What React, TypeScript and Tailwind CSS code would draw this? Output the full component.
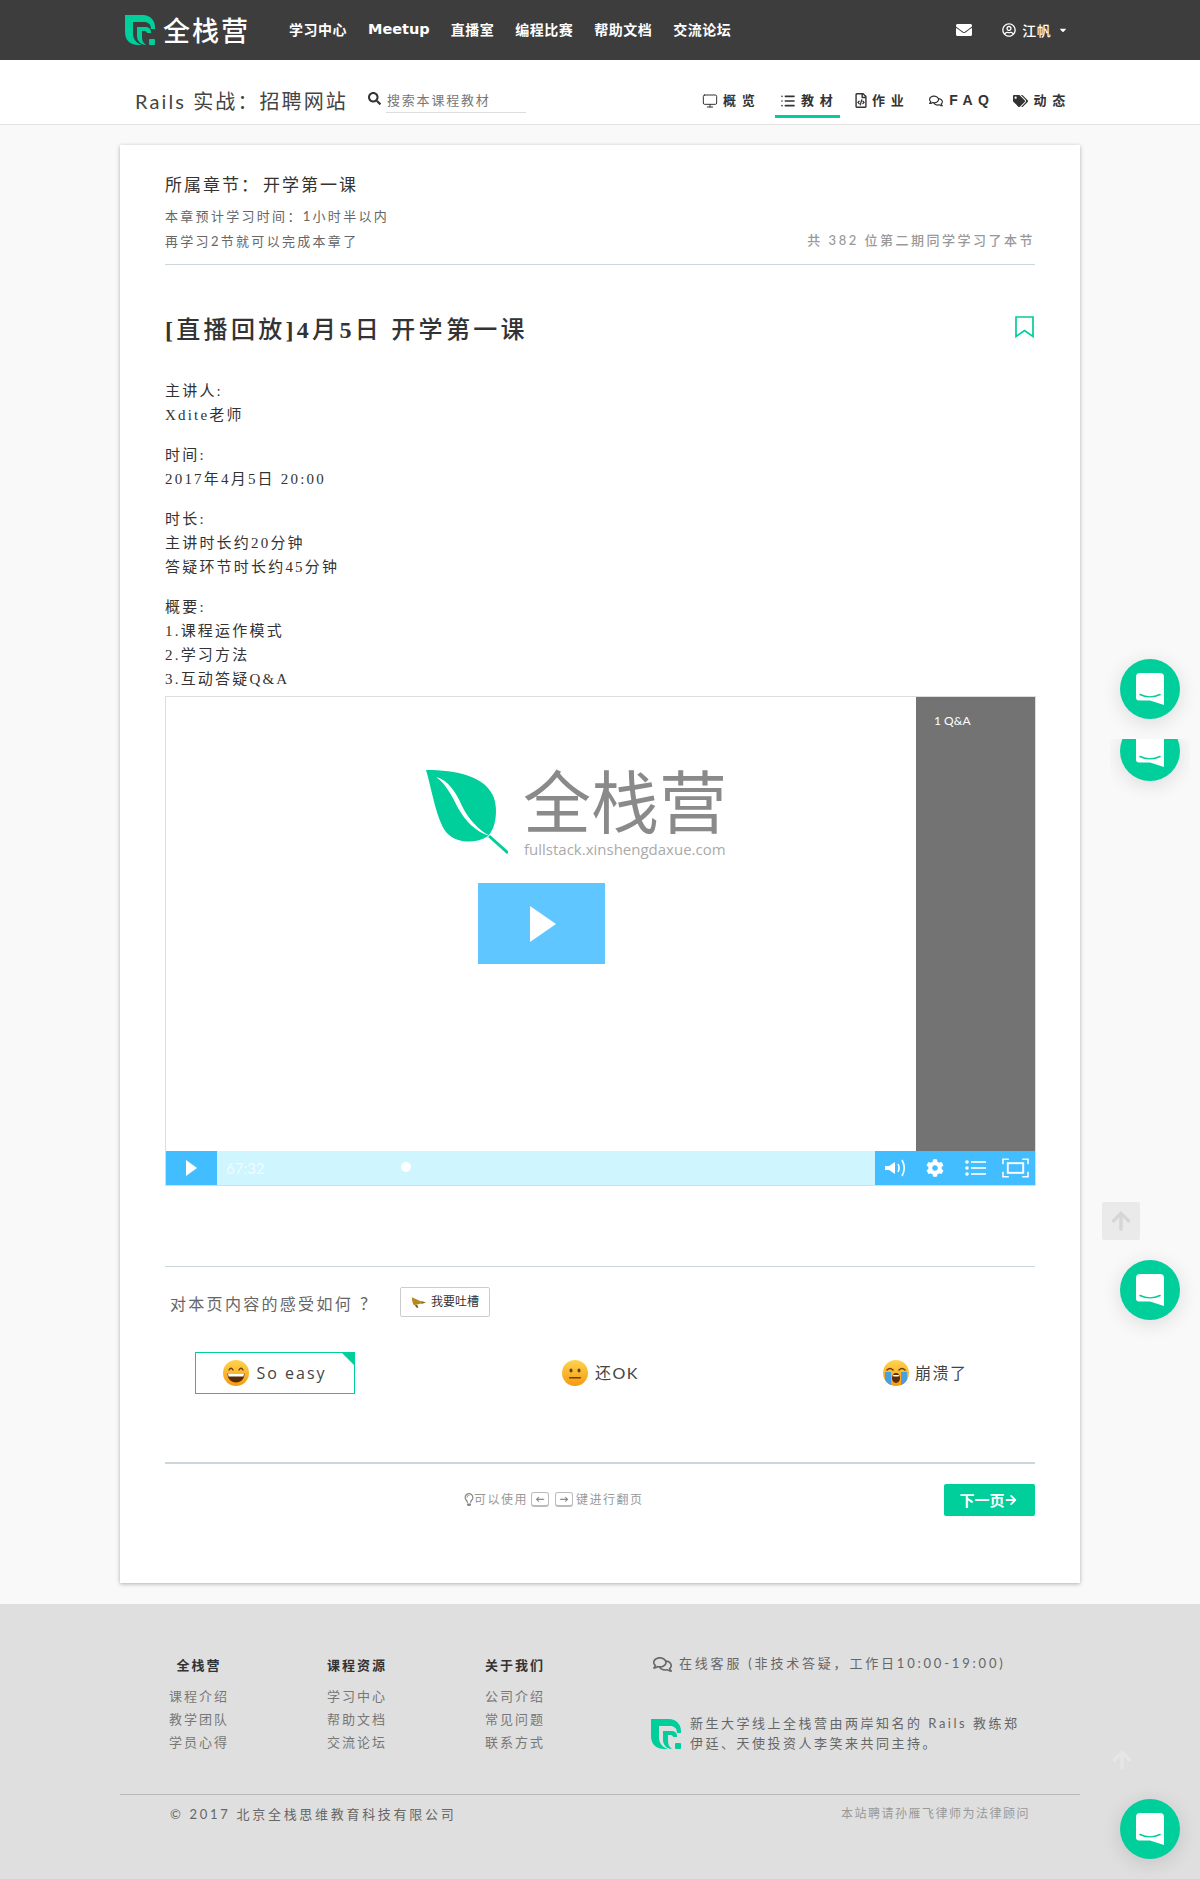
import { List, Monitor } from 'lucide-react';
import {
  FaArrowRight,
  FaArrowUp,
  FaCaretDown,
  FaCog,
  FaEnvelope,
  FaRegComments,
  FaRegFileCode,
  FaRegLightbulb,
  FaRegUserCircle,
  FaSearch,
  FaTags,
} from 'react-icons/fa';

const SANS = 'font-["Lato","Noto_Sans_CJK_SC",sans-serif]';
const SERIF = 'font-["Liberation_Serif","Noto_Sans_CJK_SC",serif]';

function Logo({ className }: { className: string }) {
  return (
    <svg viewBox="0 0 30 30" className={className} fill="#00ce9b">
      <path d="M0 0H18C25 0 30 5 30 12V14H26C26 9 23 7 19 7H8V18C8 24 11 28 17 30H13C5 30 0 25 0 17Z" />
      <path d="M12 12H20C24 12 26 14 26 17V18H22C22 17 21 16 20 16H17V22C17 25 18 28 21 30C16 30 12 26 12 21Z" />
      <rect x="24" y="24" width="6" height="6" rx="1" />
    </svg>
  );
}

function ChatBubble() {
  return (
    <svg viewBox="0 0 28 32" className="w-[28px] h-[32px]">
      <path d="M4 0H24a4 4 0 0 1 4 4V32L14 27.5H3a3 3 0 0 1-3-3V4a4 4 0 0 1 4-4Z" fill="#fff" />
      <path d="M4 21.5C10 24.5 18 24.5 24 21.5" fill="none" stroke="#00ce9b" strokeWidth="1.6" strokeLinecap="round" />
    </svg>
  );
}

function ChatFab() {
  return (
    <div className="w-[60px] h-[60px] rounded-full bg-[#00ce9b] flex items-center justify-center shadow-[0_4px_20px_rgba(0,0,0,0.12)]">
      <ChatBubble />
    </div>
  );
}

function Leaf() {
  return (
    <svg viewBox="0 0 82 86" className="w-[82px] h-[86px]">
      <path d="M0 0C30 0 60 6 68 28C72 40 70 58 62 66C50 74 30 74 20 62C10 48 6 20 0 0Z" fill="#00ce9b" />
      <path d="M10 7C22 10 30 22 36 36C42 48 52 60 64 66C50 62 40 52 32 38C26 26 20 14 10 7Z" fill="#fff" />
      <path d="M63 66L82 83" stroke="#00ce9b" strokeWidth="3" />
    </svg>
  );
}

function SmileEmoji() {
  return (
    <svg viewBox="0 0 26 26" className="w-[26px] h-[26px]">
      <defs>
        <linearGradient id="em1" x1="0" y1="0" x2="0" y2="1">
          <stop offset="0" stopColor="#ffd34d" />
          <stop offset="1" stopColor="#f59a12" />
        </linearGradient>
      </defs>
      <circle cx="13" cy="13" r="13" fill="url(#em1)" />
      <path d="M6 10Q8 6.5 10 10M16 10Q18 6.5 20 10" fill="none" stroke="#6b3d0a" strokeWidth="1.4" strokeLinecap="round" />
      <path d="M4.5 13.5H21.5C21.5 19 18 22.5 13 22.5S4.5 19 4.5 13.5Z" fill="#5a2c08" />
      <path d="M5 13.5H21L20.5 16.5H5.5Z" fill="#fff" />
    </svg>
  );
}

function NeutralEmoji() {
  return (
    <svg viewBox="0 0 26 26" className="w-[26px] h-[26px]">
      <defs>
        <linearGradient id="em2" x1="0" y1="0" x2="0" y2="1">
          <stop offset="0" stopColor="#ffd34d" />
          <stop offset="1" stopColor="#f59a12" />
        </linearGradient>
      </defs>
      <circle cx="13" cy="13" r="13" fill="url(#em2)" />
      <ellipse cx="9" cy="10.5" rx="1.5" ry="2" fill="#6b3d0a" />
      <ellipse cx="17" cy="10.5" rx="1.5" ry="2" fill="#6b3d0a" />
      <rect x="7" y="17" width="12" height="1.5" rx="0.7" fill="#6b3d0a" />
    </svg>
  );
}

function CryEmoji() {
  return (
    <svg viewBox="0 0 26 26" className="w-[26px] h-[26px]">
      <defs>
        <linearGradient id="em3" x1="0" y1="0" x2="0" y2="1">
          <stop offset="0" stopColor="#ffd34d" />
          <stop offset="1" stopColor="#f59a12" />
        </linearGradient>
        <clipPath id="em3c">
          <circle cx="13" cy="13" r="13" />
        </clipPath>
      </defs>
      <circle cx="13" cy="13" r="13" fill="url(#em3)" />
      <path d="M2 26V12H8V26Z M18 26V12H24V26Z" fill="#4a9fe0" clipPath="url(#em3c)" />
      <path d="M4 10Q7 7 10 10M16 10Q19 7 22 10" fill="none" stroke="#6b3d0a" strokeWidth="1.6" strokeLinecap="round" />
      <ellipse cx="13" cy="18" rx="4" ry="5" fill="#5a2c08" />
      <path d="M9.8 15H16.2L15.5 16.5H10.5Z" fill="#fff" />
    </svg>
  );
}

function Megaphone() {
  return (
    <svg viewBox="0 0 16 12" className="w-[15px] h-[12px]">
      <path d="M1 1L11 5.5V7.5L3 9.5C1.5 7 1 4 1 1Z" fill="#b58a1e" />
      <path d="M11 5L16 6.5L11 8Z" fill="#8a6a14" />
      <path d="M4 9.5L6 12H8L6.5 9Z" fill="#7a5c10" />
    </svg>
  );
}

function Volume() {
  return (
    <svg viewBox="0 0 21 18" className="w-[21px] h-[18px]" fill="none" stroke="#fff" strokeWidth="1.6">
      <path d="M0 7H4L10 3V15L4 11H0Z" fill="#fff" stroke="none" />
      <path d="M13 5C14.3 7.5 14.3 10.5 13 13" />
      <path d="M17 1C19.8 6 19.8 12 17 17" />
    </svg>
  );
}

function Playlist() {
  return (
    <svg viewBox="0 0 21 16" className="w-[21px] h-[16px]" fill="#fff">
      <circle cx="2" cy="2" r="1.8" />
      <circle cx="2" cy="8" r="1.8" />
      <circle cx="2" cy="14" r="1.8" />
      <rect x="6" y="1.2" width="15" height="1.6" />
      <rect x="6" y="7.2" width="15" height="1.6" />
      <rect x="6" y="13.2" width="15" height="1.6" />
    </svg>
  );
}

function Fullscreen() {
  return (
    <svg viewBox="0 0 28 20" className="w-[27px] h-[20px]" fill="none" stroke="#fff" strokeWidth="1.6">
      <path d="M1 6V1H7M21 1H27V6M27 14V19H21M7 19H1V14" />
      <rect x="6" y="5" width="16" height="10" strokeWidth="2" />
    </svg>
  );
}

function Tecla({ children }: { children: string }) {
  return (
    <span className="inline-flex items-center justify-center w-[18px] h-[15px] mx-[3px] border border-[#bbb] border-b-2 rounded-[3px] text-[9px] font-bold text-[#777] tracking-normal">
      {children}
    </span>
  );
}

function Tab({ icon, label, active, className }: { icon: React.ReactNode; label: string; active?: boolean; className?: string }) {
  return (
    <div
      className={`h-[38px] pt-[6px] flex items-center gap-[5px] px-[5px] border-b-[3px] whitespace-nowrap ${
        active ? 'border-[#00ce9b]' : 'border-transparent'
      } ${className ?? ''}`}
    >
      {icon}
      <span className="text-[13px] font-bold text-[#333] tracking-[1.3px]">{label}</span>
    </div>
  );
}

function Coluna({ titulo, itens }: { titulo: string; itens: string[] }) {
  return (
    <div className="w-[60px] flex flex-col items-center">
      <p className="text-[13px] leading-[20px] font-bold text-[#333] tracking-[2px] whitespace-nowrap">{titulo}</p>
      <div className="mt-[10px]">
        {itens.map((t) => (
          <p key={t} className="text-[13px] leading-[23px] text-[#777] tracking-[2px] whitespace-nowrap">
            {t}
          </p>
        ))}
      </div>
    </div>
  );
}

export default function App() {
  return (
    <div className={`relative w-[1200px] h-[1879px] overflow-hidden bg-[#f9f9f9] ${SANS}`}>
      {/* Barra de topo */}
      <header className="h-[60px] bg-[#3d3d3d] flex items-center text-white">
        <Logo className="ml-[125px] w-[30px] h-[30px]" />
        <span className="ml-[8px] text-[27px] leading-none font-medium tracking-[2px]">全栈营</span>
        <nav className="ml-[39px] flex items-center gap-[21px] text-[14px] font-bold tracking-[0.5px] font-['DejaVu_Sans','Noto_Sans_CJK_SC',sans-serif]">
          <span>学习中心</span>
          <span className="text-[14.5px] tracking-normal">Meetup</span>
          <span>直播室</span>
          <span>编程比赛</span>
          <span>帮助文档</span>
          <span>交流论坛</span>
        </nav>
        <FaEnvelope className="ml-[225px] w-[16px] h-[16px]" />
        <FaRegUserCircle className="ml-[30px] w-[14px] h-[14px]" />
        <span className="ml-[6px] text-[14px] font-medium tracking-[0.5px]">江帆</span>
        <FaCaretDown className="ml-[7px] w-[10px] h-[10px]" />
      </header>

      {/* Barra do curso */}
      <div className="h-[65px] bg-white border-b border-[#e2e2e2] flex items-end">
        <div className="ml-[135px] w-[233px] mb-[8px] text-[20px] leading-[30px] text-[#444] tracking-[2.1px] whitespace-nowrap">
          Rails 实战：招聘网站
        </div>
        <FaSearch className="mb-[19px] w-[13px] h-[13px] text-[#333]" />
        <div className="ml-[5px] mb-[11px] w-[140px] h-[22px] border-b border-[#ddd] text-[13px] leading-[19px] text-[#777] tracking-[1.8px] pl-[1px] whitespace-nowrap">
          搜索本课程教材
        </div>
        <div className="ml-[171px] mb-[6px] flex items-center">
          <Tab icon={<Monitor className="w-[16px] h-[16px] text-[#333]" strokeWidth={1.5} />} label="概 览" />
          <Tab
            active
            className="ml-[14px] w-[65px]"
            icon={<List className="w-[16px] h-[16px] text-[#333]" strokeWidth={2.4} />}
            label="教 材"
          />
          <Tab className="ml-[10px]" icon={<FaRegFileCode className="w-[12px] h-[15px] text-[#333]" />} label="作 业" />
          <div className="ml-[14px] h-[38px] pt-[6px] px-[5px] flex items-center gap-[6px] border-b-[3px] border-transparent whitespace-nowrap">
            <FaRegComments className="w-[14px] h-[14px] text-[#333]" />
            <span className="text-[14px] font-bold text-[#333] tracking-[5.5px] font-['Liberation_Sans']">FAQ</span>
          </div>
          <Tab className="ml-[9px]" icon={<FaTags className="w-[15px] h-[14px] text-[#333]" />} label="动 态" />
        </div>
      </div>

      {/* Cartão da lição */}
      <main className="mt-[20px] ml-[120px] w-[960px] h-[1438px] bg-white px-[45px] pt-[28px] shadow-[0_1px_4px_rgba(0,0,0,0.3)]">
        <p className="text-[17px] leading-[24px] text-[#333] tracking-[2px]">
          所属章节：<span className="ml-[3px]">开学第一课</span>
        </p>
        <div className="mt-[7px] pb-[10px] border-b border-[#cdd6da] flex items-end justify-between">
          <div className="text-[13px] leading-[25px] text-[#666] tracking-[2.3px]">
            <p>本章预计学习时间：1小时半以内</p>
            <p>再学习2节就可以完成本章了</p>
          </div>
          <p className="mb-[1px] text-[13px] leading-[25px] font-medium text-[#999] tracking-[2.5px]">
            共 382 位第二期同学学习了本节
          </p>
        </div>

        <div className="mt-[45px] h-[40px] flex items-center justify-between">
          <h1 className={`text-[24px] font-medium text-[#333] tracking-[3.3px] ${SERIF}`}>
            <b>[</b>直播回放<b>]4</b>月<b>5</b>日 开学第一课
          </h1>
          <svg viewBox="0 0 19 22" className="w-[19px] h-[22px] -mt-[7px] mr-[1px]" fill="none" stroke="#00ce9b" strokeWidth="1.7">
            <path d="M1 1H18V20.5L9.5 14.5L1 20.5Z" />
          </svg>
        </div>

        <div className={`mt-[29px] flex flex-col gap-[16px] text-[15px] leading-[24px] text-[#333] tracking-[2.2px] ${SERIF}`}>
          <div>
            <p>主讲人:</p>
            <p>Xdite老师</p>
          </div>
          <div>
            <p>时间:</p>
            <p>2017年4月5日 20:00</p>
          </div>
          <div>
            <p>时长:</p>
            <p>主讲时长约20分钟</p>
            <p>答疑环节时长约45分钟</p>
          </div>
          <div>
            <p>概要:</p>
            <p>1.课程运作模式</p>
            <p>2.学习方法</p>
            <p>3.互动答疑Q&amp;A</p>
          </div>
        </div>

        {/* Vídeo */}
        <div className="mt-[5px] w-[871px] h-[490px] border border-[#ddd] flex flex-col">
          <div className="h-[454px] flex">
            <div className="relative w-[750px] bg-white">
              <div className="absolute left-[260px] top-[73px]">
                <Leaf />
              </div>
              <div className="absolute left-[357px] top-[71px] text-[68px] leading-[68px] text-[#8a8a8a] whitespace-nowrap">
                全栈营
              </div>
              <div className="absolute left-[358px] top-[142px] text-[15px] leading-[20px] text-[#aaa] whitespace-nowrap font-['Open_Sans']">
                fullstack.xinshengdaxue.com
              </div>
              <div className="absolute left-[312px] top-[186px] w-[127px] h-[81px] bg-[#5fc6ff] flex items-center justify-center">
                <div className="ml-[3px] w-0 h-0 border-y-[18px] border-y-transparent border-l-[26px] border-l-white" />
              </div>
            </div>
            <div className="flex-1 bg-[#737373] pl-[18px] pt-[14px] text-[12px] leading-[20px] text-white">
              1 Q&amp;A
            </div>
          </div>
          <div className="h-[34px] flex bg-[#cff5ff]">
            <div className="w-[51px] bg-[#42bdff] flex items-center justify-center">
              <div className="w-0 h-0 border-y-[8px] border-y-transparent border-l-[11px] border-l-white" />
            </div>
            <span className="ml-[9px] w-[39px] text-[15px] leading-[34px] text-white/70">67:32</span>
            <div className="ml-[136px] mt-[11px] w-[10px] h-[10px] rounded-full bg-white" />
            <div className="ml-auto w-[160px] bg-[#42bdff] flex items-center pl-[10px] text-white">
              <Volume />
              <FaCog className="ml-[20px] w-[18px] h-[18px]" />
              <div className="ml-[21px]">
                <Playlist />
              </div>
              <div className="ml-[16px]">
                <Fullscreen />
              </div>
            </div>
          </div>
        </div>

        {/* Avaliação */}
        <div className="mt-[80px] border-t border-[#cdd6da] pt-[20px] flex items-center h-[51px]">
          <p className="ml-[5px] mt-[3px] w-[230px] text-[16px] text-[#666] tracking-[2.3px] whitespace-nowrap">
            对本页内容的感受如何<span className="ml-[7px] text-[18px]">?</span>
          </p>
          <div className="w-[90px] h-[30px] border border-[#ccc] rounded-[2px] flex items-center justify-center gap-[5px] text-[12px] text-[#333]">
            <Megaphone />
            我要吐槽
          </div>
        </div>
        <div className="mt-[35px] h-[42px] flex items-center text-[16px] text-[#444] tracking-[1.5px]">
          <div className="relative ml-[30px] w-[160px] h-[42px] border border-[#00ce9b] flex items-center justify-center gap-[7px]">
            <SmileEmoji />
            <span className="font-['Open_Sans'] tracking-[2px]">So easy</span>
            <div className="absolute top-0 right-0 w-0 h-0 border-l-[12px] border-l-transparent border-t-[12px] border-t-[#00ce9b]" />
          </div>
          <div className="ml-[207px] flex items-center gap-[7px]">
            <NeutralEmoji />
            <span>还OK</span>
          </div>
          <div className="ml-[244px] flex items-center gap-[6px]">
            <CryEmoji />
            <span>崩溃了</span>
          </div>
        </div>

        <div className="mt-[68px] h-[2px] bg-[#cdd6da]" />
        <div className="mt-[20px] h-[32px] flex items-center justify-between">
          <div className="ml-[299px] -mt-[1px] flex items-center text-[12px] text-[#999] tracking-[1.5px]">
            <FaRegLightbulb className="w-[10px] h-[13px] text-[#888]" />
            可以使用
            <Tecla>←</Tecla>
            <Tecla>→</Tecla>
            键进行翻页
          </div>
          <div className="w-[91px] h-[32px] rounded-[2px] bg-[#00ce9b] flex items-center justify-center text-[15px] font-bold text-white pr-[3px]">
            下一页
            <FaArrowRight className="w-[12px] h-[12px]" />
          </div>
        </div>
      </main>

      {/* Rodapé */}
      <footer className="mt-[21px] h-[275px] bg-[#dfdfdf]">
        <div className="mx-[120px] h-[191px] border-b border-[#b9b9b9] pt-[51px] flex">
          <div className="ml-[49px] flex gap-[98px]">
            <Coluna titulo="全栈营" itens={['课程介绍', '教学团队', '学员心得']} />
            <Coluna titulo="课程资源" itens={['学习中心', '帮助文档', '交流论坛']} />
            <Coluna titulo="关于我们" itens={['公司介绍', '常见问题', '联系方式']} />
          </div>
          <div className="ml-[106px] -mt-[1px]">
            <div className="flex items-center h-[20px] text-[13px] text-[#666] tracking-[2.8px] whitespace-nowrap">
              <FaRegComments className="ml-[2px] w-[19px] h-[17px] text-[#666]" />
              <span className="ml-[7px]">在线客服 (非技术答疑，工作日10:00-19:00)</span>
            </div>
            <div className="mt-[41px] flex items-center">
              <Logo className="w-[30px] h-[30px]" />
              <p className="ml-[9px] -mt-[2px] text-[13px] leading-[20px] text-[#666] tracking-[2.5px] whitespace-nowrap">
                新生大学线上全栈营由两岸知名的 Rails 教练郑
                <br />
                伊廷、天使投资人李笑来共同主持。
              </p>
            </div>
          </div>
        </div>
        <div className="mx-[120px] pt-[9px] flex justify-between">
          <p className="ml-[50px] text-[13px] leading-[20px] text-[#666] tracking-[2.7px]">© 2017 北京全栈思维教育科技有限公司</p>
          <p className="mr-[50px] mt-[1px] text-[12px] leading-[18px] text-[#999] tracking-[1.5px]">本站聘请孙雁飞律师为法律顾问</p>
        </div>
      </footer>

      {/* Botões flutuantes */}
      <div className="absolute left-[1120px] top-[659px]">
        <ChatFab />
      </div>
      <div className="absolute left-[1110px] top-[739px] w-[80px] h-[60px] overflow-hidden pl-[10px]">
        <div className="-mt-[18px]">
          <ChatFab />
        </div>
      </div>
      <div className="absolute left-[1102px] top-[1202px] w-[38px] h-[38px] rounded-[2px] bg-[#eaeaea] flex items-center justify-center">
        <FaArrowUp className="w-[22px] h-[22px] text-[#d6d6d6]" />
      </div>
      <div className="absolute left-[1120px] top-[1260px]">
        <ChatFab />
      </div>
      <FaArrowUp className="absolute left-[1111px] top-[1749px] w-[22px] h-[22px] text-[#e6e6e6]" />
      <div className="absolute left-[1120px] top-[1799px]">
        <ChatFab />
      </div>
    </div>
  );
}
